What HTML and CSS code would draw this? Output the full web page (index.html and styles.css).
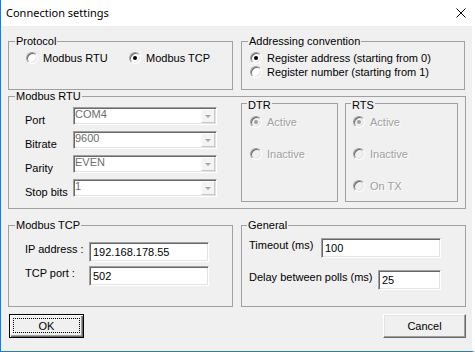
FILE: index.html
```html
<!DOCTYPE html>
<html lang="en">
<head>
    <meta charset="UTF-8">
    <title>Connection settings</title>
    <link rel="stylesheet" href="styles.css">
</head>
<body>
    <div class="window">
        <div class="titlebar">
            <span class="title">Connection settings</span>
            <svg class="close" width="10" height="10" viewBox="0 0 10 10">
                <path d="M0.5 0.5 L9.5 9.5 M9.5 0.5 L0.5 9.5" stroke="#000" stroke-width="1" fill="none"/>
            </svg>
        </div>
        <div class="client">
            <div class="row row-top">
                <fieldset class="group protocol">
                    <legend>Protocol</legend>
                    <div class="radio-line">
                        <label class="radio"><span class="circle"></span>Modbus RTU</label>
                        <label class="radio checked"><span class="circle"></span>Modbus TCP</label>
                    </div>
                </fieldset>
                <fieldset class="group addressing">
                    <legend>Addressing convention</legend>
                    <div class="radio-stack">
                        <label class="radio checked"><span class="circle"></span>Register address (starting from 0)</label>
                        <label class="radio"><span class="circle"></span>Register number (starting from 1)</label>
                    </div>
                </fieldset>
            </div>

            <fieldset class="group rtu">
                <legend>Modbus RTU</legend>
                <div class="rtu-body">
                    <div class="serial">
                        <div class="field">
                            <span class="field-label">Port</span>
                            <div class="combo"><span class="value">COM4</span><span class="drop"><span class="arrow"></span></span></div>
                        </div>
                        <div class="field">
                            <span class="field-label">Bitrate</span>
                            <div class="combo"><span class="value">9600</span><span class="drop"><span class="arrow"></span></span></div>
                        </div>
                        <div class="field">
                            <span class="field-label">Parity</span>
                            <div class="combo"><span class="value">EVEN</span><span class="drop"><span class="arrow"></span></span></div>
                        </div>
                        <div class="field">
                            <span class="field-label">Stop bits</span>
                            <div class="combo"><span class="value">1</span><span class="drop"><span class="arrow"></span></span></div>
                        </div>
                    </div>
                    <fieldset class="group sub dtr">
                        <legend>DTR</legend>
                        <div class="radio-col">
                            <label class="radio disabled checked"><span class="circle"></span>Active</label>
                            <label class="radio disabled"><span class="circle"></span>Inactive</label>
                        </div>
                    </fieldset>
                    <fieldset class="group sub rts">
                        <legend>RTS</legend>
                        <div class="radio-col">
                            <label class="radio disabled checked"><span class="circle"></span>Active</label>
                            <label class="radio disabled"><span class="circle"></span>Inactive</label>
                            <label class="radio disabled"><span class="circle"></span>On TX</label>
                        </div>
                    </fieldset>
                </div>
            </fieldset>

            <div class="row row-bottom">
                <fieldset class="group tcp">
                    <legend>Modbus TCP</legend>
                    <div class="tcp-body">
                        <div class="entry">
                            <span class="entry-label">IP address :</span>
                            <div class="textbox wide">192.168.178.55</div>
                        </div>
                        <div class="entry">
                            <span class="entry-label">TCP port :</span>
                            <div class="textbox wide">502</div>
                        </div>
                    </div>
                </fieldset>
                <fieldset class="group general">
                    <legend>General</legend>
                    <div class="general-body">
                        <div class="entry spread">
                            <span class="entry-label">Timeout (ms)</span>
                            <div class="textbox wide">100</div>
                        </div>
                        <div class="entry spread">
                            <span class="entry-label">Delay between polls (ms)</span>
                            <div class="textbox short">25</div>
                        </div>
                    </div>
                </fieldset>
            </div>

            <div class="buttons">
                <button class="btn btn-default">OK</button>
                <button class="btn btn-cancel">Cancel</button>
            </div>
        </div>
    </div>
</body>
</html>
```

FILE: styles.css
```css
html, body {
    margin: 0;
    padding: 0;
    background: #fff;
}

body {
    font-family: 'Liberation Sans', Arial, sans-serif;
    font-size: 11px;
    line-height: 13px;
    color: #000;
}

.window {
    width: 475px;
    height: 352px;
    box-sizing: border-box;
    border-left: 1px solid #1a7fd4;
    border-bottom: 1px solid #1a7fd4;
    border-right: 3px solid #fff;
    background: #f0f0f0;
    display: flex;
    flex-direction: column;
}

/* title bar */
.titlebar {
    height: 26px;
    box-sizing: border-box;
    background: #fff;
    display: flex;
    justify-content: space-between;
    align-items: flex-start;
    padding: 6px 6px 0 5px;
}

.title {
    font-family: 'Noto Sans', sans-serif;
    font-size: 11px;
    line-height: 13px;
}

.close {
    margin-top: 2px;
}

/* client area */
.client {
    padding: 9px 6px 0 7px;
}

.row {
    display: flex;
    gap: 8px;
}

.group {
    margin: 0;
    padding: 0;
    min-width: 0;
    box-sizing: border-box;
    border: 1px solid #a0a0a0;
}

.group legend {
    margin-left: 6px;
    padding: 0 1px;
    font-size: 11px;
    line-height: 13px;
}

.protocol {
    width: 225px;
    height: 55px;
}

.addressing {
    width: 224px;
    height: 55px;
}

.radio-line {
    display: flex;
    margin-top: 3px;
    padding-left: 17px;
}

.radio-line .radio {
    width: 104px;
}

.radio-stack {
    margin-top: 3px;
    padding-left: 8px;
}

/* radio buttons */
.radio {
    display: flex;
    align-items: center;
    height: 14px;
    white-space: nowrap;
}

.radio .circle {
    position: relative;
    width: 12px;
    height: 12px;
    box-sizing: border-box;
    border-radius: 50%;
    border: 1px solid;
    border-color: #a0a0a0 #fff #fff #a0a0a0;
    background: #fff;
    box-shadow: inset 1px 1px 0 #696969, inset -1px -1px 0 #e3e3e3;
    margin-right: 5px;
    flex: none;
}

.radio.checked .circle::after {
    content: '';
    position: absolute;
    left: 3px;
    top: 3px;
    width: 4px;
    height: 4px;
    border-radius: 50%;
    background: #000;
}

.radio.disabled {
    color: #a0a0a0;
    text-shadow: 1px 1px 0 #fff;
}

.radio.disabled .circle {
    background: #f0f0f0;
}

.radio.disabled.checked .circle::after {
    background: #a0a0a0;
}

/* Modbus RTU */
.rtu {
    width: 458px;
    height: 119px;
}

.rtu-body {
    display: flex;
    align-items: flex-start;
}

.serial {
    width: 208px;
    box-sizing: border-box;
    padding-left: 16px;
    margin-top: 4px;
}

.field {
    display: flex;
    align-items: flex-end;
    height: 18px;
    margin-bottom: 6px;
}

.field-label {
    width: 48px;
    margin-bottom: -2px;
}

.combo {
    width: 144px;
    height: 18px;
    box-sizing: border-box;
    border: 1px solid;
    border-color: #a0a0a0 #fff #fff #a0a0a0;
    box-shadow: inset 1px 1px 0 #696969, inset -1px -1px 0 #e3e3e3;
    background: #fff;
    display: flex;
    align-items: flex-start;
}

.combo .value {
    flex: 1;
    padding-left: 1px;
    color: #6d6d6d;
}

.combo .drop {
    width: 14px;
    height: 14px;
    margin: 1px 1px 0 0;
    box-sizing: border-box;
    border: 1px solid;
    border-color: #fdfdfd #c8c8c8 #c8c8c8 #fdfdfd;
    background: #f4f4f4;
    display: flex;
    align-items: center;
    justify-content: center;
}

.combo .arrow {
    width: 0;
    height: 0;
    border-left: 3px solid transparent;
    border-right: 3px solid transparent;
    border-top: 3px solid #a8a8a8;
}

.sub {
    margin-top: -6px;
    height: 105px;
}

.sub legend {
    position: relative;
    top: 2px;
    margin-left: 5px;
}

.dtr {
    width: 97px;
    margin-left: 24px;
}

.rts {
    width: 113px;
    margin-left: 7px;
}

.radio-col {
    margin-top: 5px;
    padding-left: 7px;
}

.dtr .radio-col {
    padding-left: 8px;
}

.radio-col .radio {
    margin-bottom: 18px;
}

/* Modbus TCP / General */
.row-bottom {
    margin-top: 10px;
}

.tcp,
.general {
    width: 225px;
    height: 88px;
}

.general legend {
    margin-left: 5px;
}

.tcp-body {
    margin-top: 10px;
    padding-left: 16px;
}

.general-body {
    margin-top: 6px;
    padding-left: 7px;
}

.entry {
    display: flex;
    align-items: flex-start;
    height: 20px;
    margin-bottom: 4px;
}

.tcp .entry-label {
    width: 64px;
}

.entry-label {
    margin-top: 1px;
    white-space: nowrap;
}

.entry.spread {
    width: 192px;
    justify-content: space-between;
    margin-bottom: 12px;
}

.textbox {
    height: 20px;
    box-sizing: border-box;
    border: 1px solid;
    border-color: #a0a0a0 #fff #fff #a0a0a0;
    box-shadow: inset 1px 1px 0 #696969, inset -1px -1px 0 #e3e3e3;
    background: #fff;
    padding: 3px 3px 0;
    white-space: nowrap;
}

.textbox.wide {
    width: 120px;
}

.textbox.short {
    width: 63px;
}

/* buttons */
.buttons {
    display: flex;
    justify-content: space-between;
    margin-top: 7px;
}

.btn {
    position: relative;
    height: 24px;
    box-sizing: border-box;
    margin: 0;
    padding: 0;
    font-family: 'Liberation Sans', Arial, sans-serif;
    font-size: 11px;
    line-height: 13px;
    color: #000;
    background: #f0f0f0;
    border: 1px solid;
    border-color: #fff #696969 #696969 #fff;
    box-shadow: inset -1px -1px 0 #a0a0a0, inset 1px 1px 0 #e3e3e3;
}

.btn-default {
    width: 75px;
    margin-left: 1px;
    border-color: #000;
    box-shadow: inset 1px 1px 0 #fff, inset -1px -1px 0 #696969, inset -2px -2px 0 #a0a0a0;
}

.btn-default::after {
    content: '';
    position: absolute;
    left: 3px;
    top: 3px;
    right: 3px;
    bottom: 4px;
    border: 1px dotted #000;
}

.btn-cancel {
    width: 83px;
}
```
